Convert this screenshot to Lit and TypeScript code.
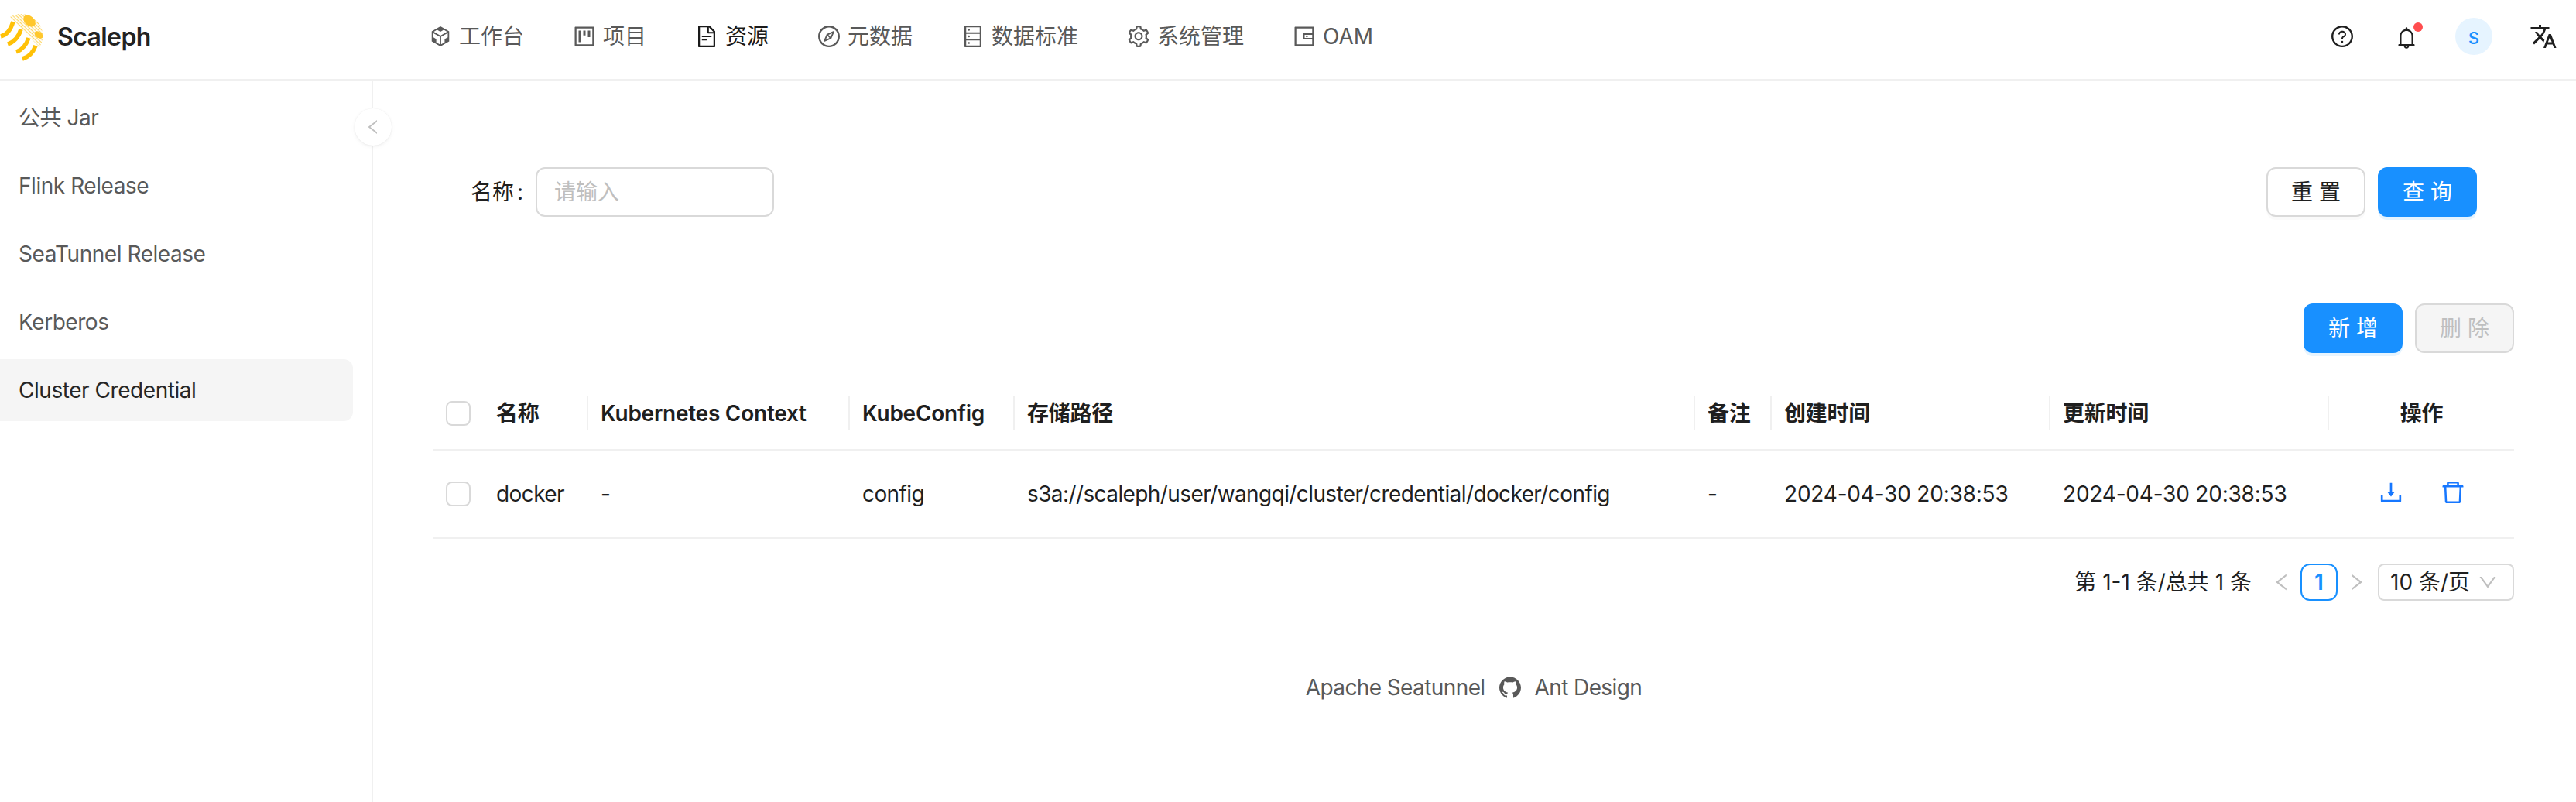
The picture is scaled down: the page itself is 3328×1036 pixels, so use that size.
import { LitElement, html, css, svg } from 'lit';
import { customElement, state } from 'lit/decorators.js';

const ICONS: Record<string, string> = {
  workbench:
    'M709.6 210l.4-.2h.2L512 96 313.9 209.8h-.2l.7.3L151.5 304v416L512 928l360.5-208V304l-162.9-94zM482.7 843.6L339.6 761V621.4L210 547.8V372.9l272.7 157.3v313.4zM238.2 321.5l134.7-77.8 138.9 79.7 139.1-79.9 135.2 78-273.9 158-274-158zM814 548.3l-128.8 73.1v139.1l-143.9 83V530.4L814 373.1v175.2z',
  project:
    'M280 752h80c4.4 0 8-3.6 8-8V280c0-4.4-3.6-8-8-8h-80c-4.4 0-8 3.6-8 8v464c0 4.4 3.6 8 8 8zm192-280h80c4.4 0 8-3.6 8-8V280c0-4.4-3.6-8-8-8h-80c-4.4 0-8 3.6-8 8v184c0 4.4 3.6 8 8 8zm192 72h80c4.4 0 8-3.6 8-8V280c0-4.4-3.6-8-8-8h-80c-4.4 0-8 3.6-8 8v256c0 4.4 3.6 8 8 8zm216-432H144c-17.7 0-32 14.3-32 32v736c0 17.7 14.3 32 32 32h736c17.7 0 32-14.3 32-32V144c0-17.7-14.3-32-32-32zm-40 728H184V184h656v656z',
  file: 'M854.6 288.6L639.4 73.4c-6-6-14.1-9.4-22.6-9.4H192c-17.7 0-32 14.3-32 32v832c0 17.7 14.3 32 32 32h640c17.7 0 32-14.3 32-32V311.3c0-8.5-3.4-16.7-9.4-22.7zM790.2 326H602V137.8L790.2 326zm1.8 562H232V136h302v216a42 42 0 0042 42h216v494zM504 618H320c-4.4 0-8 3.6-8 8v48c0 4.4 3.6 8 8 8h184c4.4 0 8-3.6 8-8v-48c0-4.4-3.6-8-8-8zM312 490v48c0 4.4 3.6 8 8 8h384c4.4 0 8-3.6 8-8v-48c0-4.4-3.6-8-8-8H320c-4.4 0-8 3.6-8 8z',
  compass:
    'M512 64C264.6 64 64 264.6 64 512s200.6 448 448 448 448-200.6 448-448S759.4 64 512 64zm0 820c-205.4 0-372-166.6-372-372s166.6-372 372-372 372 166.6 372 372-166.6 372-372 372zm198.4-588.1a32 32 0 00-24.5.5L414.9 415 296.4 686c-3.6 8.2-3.6 17.5 0 25.7 3.4 7.8 9.7 13.9 17.7 17 3.8 1.5 7.7 2.2 11.7 2.2 4.4 0 8.7-.9 12.8-2.7l271-118.6 118.5-271a32.06 32.06 0 00-17.7-42.7zM576.8 534.4l26.2 26.2-42.4 42.4-26.2-26.2L380 644.4 447.5 490 422 464.4l42.4-42.4 25.5 25.5L644.4 380l-67.6 154.4zM464.4 422L422 464.4l25.5 25.6 86.9 86.8 26.2 26.2 42.4-42.4-26.2-26.2-86.8-86.9z',
  database:
    'M832 64H192c-17.7 0-32 14.3-32 32v832c0 17.7 14.3 32 32 32h640c17.7 0 32-14.3 32-32V96c0-17.7-14.3-32-32-32zm-600 72h560v208H232V136zm560 480H232V408h560v208zm0 272H232V680h560v208zM304 240a40 40 0 1080 0 40 40 0 10-80 0zm0 272a40 40 0 1080 0 40 40 0 10-80 0zm0 272a40 40 0 1080 0 40 40 0 10-80 0z',
  setting:
    'M924.8 625.7l-65.5-56c3.1-19 4.7-38.4 4.7-57.8s-1.6-38.8-4.7-57.8l65.5-56a32.03 32.03 0 009.3-35.2l-.9-2.6a443.74 443.74 0 00-79.7-137.9l-1.8-2.1a32.12 32.12 0 00-35.1-9.5l-81.3 28.9c-30-24.6-63.5-44-99.7-57.6l-15.7-85a32.05 32.05 0 00-25.8-25.7l-2.7-.5c-52.1-9.4-106.9-9.4-159 0l-2.7.5a32.05 32.05 0 00-25.8 25.7l-15.8 85.4a351.86 351.86 0 00-99 57.4l-81.9-29.1a32 32 0 00-35.1 9.5l-1.8 2.1a446.02 446.02 0 00-79.7 137.9l-.9 2.6c-4.5 12.5-.8 26.5 9.3 35.2l66.3 56.6c-3.1 18.8-4.6 38-4.6 57.1 0 19.2 1.5 38.4 4.6 57.1L99 625.5a32.03 32.03 0 00-9.3 35.2l.9 2.6c18.1 50.4 44.9 96.9 79.7 137.9l1.8 2.1a32.12 32.12 0 0035.1 9.5l81.9-29.1c29.8 24.5 63.1 43.9 99 57.4l15.8 85.4a32.05 32.05 0 0025.8 25.7l2.7.5a449.4 449.4 0 00159 0l2.7-.5a32.05 32.05 0 0025.8-25.7l15.7-85a350 350 0 0099.7-57.6l81.3 28.9a32 32 0 0035.1-9.5l1.8-2.1c34.8-41.1 61.6-87.5 79.7-137.9l.9-2.6c4.5-12.3.8-26.3-9.3-35zM788.3 465.9c2.5 15.1 3.8 30.6 3.8 46.1s-1.3 31-3.8 46.1l-6.6 40.1 74.7 63.9a370.03 370.03 0 01-42.6 73.6L721 702.8l-31.4 25.8c-23.9 19.6-50.5 35-79.3 45.8l-38.1 14.3-17.9 97a377.5 377.5 0 01-85 0l-17.9-97.2-37.8-14.5c-28.5-10.8-55-26.2-78.7-45.7l-31.4-25.9-93.4 33.2c-17-22.9-31.2-47.6-42.6-73.6l75.5-64.5-6.5-40c-2.4-14.9-3.7-30.3-3.7-45.5 0-15.3 1.2-30.6 3.7-45.5l6.5-40-75.5-64.5c11.3-26.1 25.6-50.7 42.6-73.6l93.4 33.2 31.4-25.9c23.7-19.5 50.2-34.9 78.7-45.7l37.9-14.3 17.9-97.2c28.1-3.2 56.8-3.2 85 0l17.9 97 38.1 14.3c28.7 10.8 55.4 26.2 79.3 45.8l31.4 25.8 92.8-32.9c17 22.9 31.2 47.6 42.6 73.6L781.8 426l6.5 39.9zM512 326c-97.2 0-176 78.8-176 176s78.8 176 176 176 176-78.8 176-176-78.8-176-176-176zm79.2 255.2A111.6 111.6 0 01512 614c-29.9 0-58-11.7-79.2-32.8A111.6 111.6 0 01400 502c0-29.9 11.7-58 32.8-79.2C454 401.6 482.1 390 512 390c29.9 0 58 11.6 79.2 32.8A111.6 111.6 0 01624 502c0 29.9-11.7 58-32.8 79.2z',
  wallet:
    'M880 112H144c-17.7 0-32 14.3-32 32v736c0 17.7 14.3 32 32 32h736c17.7 0 32-14.3 32-32V144c0-17.7-14.3-32-32-32zm-40 464H528V448h312v128zm0 264H184V184h656v200H496c-17.7 0-32 14.3-32 32v192c0 17.7 14.3 32 32 32h344v200zM580 512a40 40 0 1080 0 40 40 0 10-80 0z',
  question:
    'M512 64C264.6 64 64 264.6 64 512s200.6 448 448 448 448-200.6 448-448S759.4 64 512 64zm0 820c-205.4 0-372-166.6-372-372s166.6-372 372-372 372 166.6 372 372-166.6 372-372 372zM623.6 316.7C593.6 290.4 554 276 512 276s-81.6 14.5-111.6 40.7C369.2 344 352 380.7 352 420v7.6c0 4.4 3.6 8 8 8h48c4.4 0 8-3.6 8-8V420c0-44.1 43.1-80 96-80s96 35.9 96 80c0 31.1-22 59.6-56.1 72.7-21.2 8.1-39.2 22.3-52.1 40.9-13.1 19-19.9 41.8-19.9 64.9V620c0 4.4 3.6 8 8 8h48c4.4 0 8-3.6 8-8v-22.7a48.3 48.3 0 0130.9-44.8c59-22.7 97.1-74.7 97.1-132.5.1-39.3-17.1-76-48.3-103.3zM472 732a40 40 0 1080 0 40 40 0 10-80 0z',
  bell: 'M816 768h-24V428c0-141.1-104.3-257.7-240-277.1V112c0-22.1-17.9-40-40-40s-40 17.9-40 40v38.9c-135.7 19.4-240 136-240 277.1v340h-24c-17.7 0-32 14.3-32 32v32c0 4.4 3.6 8 8 8h216c0 61.8 50.2 112 112 112s112-50.2 112-112h216c4.4 0 8-3.6 8-8v-32c0-17.7-14.3-32-32-32zM512 888c-26.5 0-48-21.5-48-48h96c0 26.5-21.5 48-48 48zM304 768V428c0-55.6 21.6-107.8 60.9-147.1S456.4 220 512 220c55.6 0 107.8 21.6 147.1 60.9S720 372.4 720 428v340H304z',
  download:
    'M505.7 661a8 8 0 0012.6 0l112-141.7c4.1-5.2.4-12.9-6.3-12.9h-74.1V168c0-4.4-3.6-8-8-8h-60c-4.4 0-8 3.6-8 8v338.3H400c-6.7 0-10.4 7.7-6.3 12.9l112 141.8zM878 626h-60c-4.4 0-8 3.6-8 8v154H214V634c0-4.4-3.6-8-8-8h-60c-4.4 0-8 3.6-8 8v198c0 17.7 14.3 32 32 32h684c17.7 0 32-14.3 32-32V634c0-4.4-3.6-8-8-8z',
  trash:
    'M360 184h-8c4.4 0 8-3.6 8-8v8h304v-8c0 4.4 3.6 8 8 8h-8v72h72v-80c0-35.3-28.7-64-64-64H352c-35.3 0-64 28.7-64 64v80h72v-72zm504 72H160c-17.7 0-32 14.3-32 32v32c0 4.4 3.6 8 8 8h60.4l24.7 523c1.6 34.1 29.8 61 63.9 61h454c34.2 0 62.3-26.8 63.9-61l24.7-523H888c4.4 0 8-3.6 8-8v-32c0-17.7-14.3-32-32-32zM731.3 840H292.7l-24.2-512h487l-24.2 512z',
  github:
    'M511.6 76.3C264.3 76.2 64 276.4 64 523.5 64 718.9 189.3 885 363.8 946c23.5 5.9 19.9-10.8 19.9-22.2v-77.5c-135.7 15.9-141.2-73.9-150.3-88.9C215 726 171.5 718 184.5 703c30.9-15.9 62.4 4 98.9 57.9 26.4 39.1 77.9 32.5 104 26 5.7-23.5 17.9-44.5 34.7-60.8-140.6-25.2-199.2-111-199.2-213 0-49.5 16.3-95 48.3-131.7-20.4-60.5 1.9-112.3 4.9-120 58.1-5.2 118.5 41.6 123.2 45.3 33-8.9 70.7-13.6 112.9-13.6 42.4 0 80.2 4.9 113.5 13.9 11.3-8.6 67.3-48.8 121.3-43.9 2.9 7.7 24.7 58.3 5.5 118 32.4 36.8 48.9 82.7 48.9 132.3 0 102.2-59 188.1-200 212.9a127.5 127.5 0 0138.1 91v112.5c.8 9 0 17.9 15 17.9 177.1-59.7 304.6-227 304.6-424.1 0-247.2-200.4-447.3-447.5-447.3z',
  left: 'M724 218.3V141c0-6.7-7.7-10.4-12.9-6.3L260.3 486.8a31.86 31.86 0 000 50.3l450.8 352.1c5.3 4.1 12.9.4 12.9-6.3v-77.3c0-4.9-2.3-9.6-6.1-12.6l-360-281 360-281.1c3.8-3 6.1-7.7 6.1-12.6z',
  right:
    'M765.7 486.8L314.9 134.7A7.97 7.97 0 00302 141v77.3c0 4.9 2.3 9.6 6.1 12.6l360 281.1-360 281.1c-3.9 3-6.1 7.7-6.1 12.6V883c0 6.7 7.7 10.4 12.9 6.3l450.8-352.1a31.96 31.96 0 000-50.4z',
  down: 'M884 256h-75c-5.1 0-9.9 2.5-12.9 6.5L512 654.2 227.9 262.5c-3-4-7.8-6.5-12.9-6.5h-75c-6.5 0-10.3 7.4-6.5 12.7l352.6 486.1c12.8 17.6 39 17.6 51.7 0l352.6-486.1c3.9-5.3.1-12.7-6.4-12.7z',
};

const icon = (name: string, size = 32) => html`<svg
  width=${size}
  height=${size}
  viewBox="0 0 1024 1024"
  fill="currentColor"
>
  ${svg`<path d=${ICONS[name]}></path>`}
</svg>`;

const MENU = [
  { icon: 'workbench', label: '工作台' },
  { icon: 'project', label: '项目' },
  { icon: 'file', label: '资源', active: true },
  { icon: 'compass', label: '元数据' },
  { icon: 'database', label: '数据标准' },
  { icon: 'setting', label: '系统管理' },
  { icon: 'wallet', label: 'OAM' },
];

const SIDE_ITEMS = ['公共 Jar', 'Flink Release', 'SeaTunnel Release', 'Kerberos', 'Cluster Credential'];

const COLUMNS = ['名称', 'Kubernetes Context', 'KubeConfig', '存储路径', '备注', '创建时间', '更新时间'];

const ROW = [
  { text: 'docker' },
  { text: '-' },
  { text: 'config' },
  { text: 's3a://scaleph/user/wangqi/cluster/credential/docker/config' },
  { text: '-' },
  { text: '2024-04-30 20:38:53', date: true },
  { text: '2024-04-30 20:38:53', date: true },
];

@customElement('app-root')
class AppRoot extends LitElement {
  static styles = css`
    :host {
      display: block;
      width: 3328px;
      height: 1036px;
      overflow: hidden;
      background: #fff;
      color: #1f1f1f;
      font-family: Inter, 'Noto Sans CJK SC', sans-serif;
      font-size: 28px;
      line-height: 44px;
    }

    svg {
      display: block;
      flex: none;
    }

    .header {
      display: flex;
      align-items: center;
      height: 102px;
      border-bottom: 2px solid #f0f0f0;
    }

    .brand {
      display: flex;
      align-items: center;
      gap: 12px;
      width: 553px;
      flex: none;
      font-size: 32px;
      font-weight: 600;
      letter-spacing: -0.6px;
      color: #222;
    }

    .brand span {
      padding-bottom: 6px;
    }

    .menu {
      display: flex;
      gap: 62px;
      flex: 1;
      padding-bottom: 8px;
    }

    .menu__item {
      display: flex;
      align-items: center;
      gap: 8px;
      color: #595959;
    }

    .menu__item--active {
      color: #1a1a1a;
    }

    .tools {
      position: relative;
      height: 102px;
      width: 318px;
      flex: none;
      color: #1f1f1f;
    }

    .tools > * {
      position: absolute;
    }

    .help {
      left: 0;
      top: 31px;
    }

    .bell {
      left: 83px;
      top: 33px;
    }

    .dot {
      left: 108px;
      top: 29px;
      width: 12px;
      height: 12px;
      border-radius: 50%;
      background: #ff4d4f;
    }

    .avatar {
      left: 162px;
      top: 23px;
      width: 48px;
      height: 48px;
      border-radius: 50%;
      background: #e6f4ff;
      color: #1890ff;
      display: flex;
      align-items: center;
      justify-content: center;
    }

    .lang {
      left: 258px;
      top: 29px;
    }

    .body {
      display: flex;
      height: 932px;
    }

    .side {
      position: relative;
      width: 480px;
      flex: none;
      border-right: 2px solid #f0f0f0;
      padding-top: 8px;
    }

    .side__item {
      display: flex;
      align-items: center;
      height: 80px;
      width: 456px;
      box-sizing: border-box;
      margin-bottom: 8px;
      padding-left: 24px;
      border-radius: 0 12px 12px 0;
      color: #595959;
      letter-spacing: -0.45px;
    }

    .side__item--active {
      background: #f5f5f5;
      color: #262626;
    }

    .collapse {
      position: absolute;
      right: -26px;
      top: 36px;
      width: 48px;
      height: 48px;
      border-radius: 50%;
      background: #fff;
      box-shadow: 0 2px 8px -2px rgba(0, 0, 0, 0.05), 0 1px 4px -1px rgba(25, 15, 15, 0.07),
        0 0 1px 0 rgba(0, 0, 0, 0.08);
      color: #bfbfbf;
      display: flex;
      align-items: center;
      justify-content: center;
    }

    .content {
      flex: 1;
      padding: 112px 80px 0 78px;
      min-width: 0;
    }

    .search {
      display: flex;
      align-items: center;
      height: 64px;
      padding: 0 48px;
    }

    .search__label {
      margin-right: 16px;
    }

    .search__colon {
      margin-left: 4px;
    }

    .search__input {
      width: 308px;
      height: 64px;
      box-sizing: border-box;
      padding-left: 22px;
      border: 2px solid #d9d9d9;
      border-radius: 12px;
      color: #bfbfbf;
      display: flex;
      align-items: center;
    }

    .btns {
      display: flex;
      gap: 16px;
      margin-left: auto;
    }

    .btn {
      width: 128px;
      height: 64px;
      box-sizing: border-box;
      border: 2px solid #d9d9d9;
      border-radius: 12px;
      background: #fff;
      box-shadow: 0 4px 0 rgba(0, 0, 0, 0.02);
      display: flex;
      align-items: center;
      justify-content: center;
      color: #1f1f1f;
    }

    .btn--primary {
      background: #1890ff;
      border-color: #1890ff;
      color: #fff;
      box-shadow: 0 4px 0 rgba(5, 145, 255, 0.1);
    }

    .btn--disabled {
      background: #f5f5f5;
      color: #bfbfbf;
      box-shadow: none;
    }

    .toolbar {
      display: flex;
      justify-content: flex-end;
      gap: 16px;
      margin-top: 112px;
      margin-bottom: 32px;
    }

    .row {
      display: grid;
      grid-template-columns: 65px 135px 338px 213px 879px 99px 360px 360px 239px;
      align-items: center;
      border-bottom: 2px solid #f0f0f0;
    }

    .row--head {
      height: 94px;
      box-sizing: border-box;
      font-weight: 600;
      letter-spacing: -0.25px;
    }

    .row--body {
      height: 114px;
      box-sizing: border-box;
      letter-spacing: -0.6px;
    }

    .cell {
      position: relative;
      padding: 0 16px;
      white-space: nowrap;
    }

    .cell--date {
      letter-spacing: -0.2px;
    }

    .row--head .cell:not(.cell--op):not(.cell--check)::after {
      content: '';
      position: absolute;
      right: 0;
      top: 0;
      width: 2px;
      height: 44px;
      background: #f0f0f0;
    }

    .cell--check {
      padding: 0 0 0 16px;
    }

    .cell--op {
      display: flex;
      justify-content: center;
      gap: 44px;
      color: #1677ff;
    }

    .row--body .cell--op {
      padding-bottom: 4px;
    }

    .row--head .cell--op {
      color: #1f1f1f;
    }

    .check {
      width: 32px;
      height: 32px;
      box-sizing: border-box;
      border: 2px solid #d9d9d9;
      border-radius: 8px;
    }

    .pager {
      display: flex;
      align-items: center;
      justify-content: flex-end;
      height: 48px;
      margin-top: 32px;
    }

    .pager__total {
      margin-right: 15px;
    }

    .pager__arrow {
      color: #bfbfbf;
      width: 48px;
      display: flex;
      justify-content: center;
    }

    .pager__page {
      width: 48px;
      height: 48px;
      box-sizing: border-box;
      border: 2px solid #1890ff;
      border-radius: 12px;
      color: #1890ff;
      font-weight: 600;
      display: flex;
      align-items: center;
      justify-content: center;
    }

    .pager__size {
      display: flex;
      align-items: center;
      justify-content: space-between;
      width: 176px;
      height: 48px;
      box-sizing: border-box;
      margin-left: 4px;
      padding: 0 18px 0 14px;
      border: 2px solid #d9d9d9;
      border-radius: 8px;
    }

    .pager__size svg {
      color: #bfbfbf;
    }

    .footer {
      display: flex;
      align-items: center;
      justify-content: center;
      gap: 16px;
      margin-top: 90px;
      color: #595959;
      letter-spacing: -0.6px;
    }
  `;

  @state()
  private activeSide = 4;

  private renderLogo() {
    const legs = [
      'M17 28C14 38 9 45 1 47',
      'M27 38C24 48 19 54 10 57',
      'M37 49C34 58 30 64 21 67',
      'M46 59C43 67 39 73 29 76',
    ];
    return html`<svg width="62" height="102" viewBox="0 0 62 102">
      <defs>
        <pattern id="hatch" width="3" height="3" patternUnits="userSpaceOnUse" patternTransform="rotate(43)">
          <rect width="3" height="1.2" fill="#fcd766"></rect>
        </pattern>
        <clipPath id="dome"><path d="M13 22L51 61A28 28 0 0 0 13 22Z"></path></clipPath>
      </defs>
      <rect width="62" height="80" fill="url(#hatch)" clip-path="url(#dome)"></rect>
      <ellipse cx="38" cy="27" rx="9" ry="6" transform="rotate(42 38 27)" fill="#ffc72c"></ellipse>
      <ellipse cx="50" cy="45" rx="6" ry="4" transform="rotate(35 50 45)" fill="#ffc72c"></ellipse>
      ${legs.map(
        (d) => svg`<path d=${d} fill="none" stroke="#ffc107" stroke-width="5.5"></path>`,
      )}
    </svg>`;
  }

  private renderHeader() {
    return html`<div class="header">
      <div class="brand">${this.renderLogo()}<span>Scaleph</span></div>
      <div class="menu">
        ${MENU.map(
          (item) => html`<div class="menu__item ${item.active ? 'menu__item--active' : ''}">
            ${icon(item.icon)}<span>${item.label}</span>
          </div>`,
        )}
      </div>
      <div class="tools">
        <div class="help">${icon('question')}</div>
        <div class="bell">${icon('bell')}</div>
        <div class="dot"></div>
        <div class="avatar">s</div>
        <div class="lang">
          <svg width="36" height="36" viewBox="0 0 24 24" fill="currentColor">
            <path
              d="M12.87 15.07l-2.54-2.51.03-.03c1.74-1.94 2.98-4.17 3.71-6.53H17V4h-7V2H8v2H1v1.99h11.17C11.5 7.92 10.44 9.75 9 11.35 8.07 10.32 7.3 9.19 6.69 8h-2c.73 1.63 1.73 3.17 2.98 4.56l-5.09 5.02L4 19l5-5 3.11 3.11.76-2.04zM18.5 10h-2L12 22h2l1.12-3h4.75L21 22h2l-4.5-12zm-2.62 7l1.62-4.33L19.12 17h-3.24z"
            ></path>
          </svg>
        </div>
      </div>
    </div>`;
  }

  private renderSide() {
    return html`<div class="side">
      ${SIDE_ITEMS.map(
        (label, i) => html`<div class="side__item ${i === this.activeSide ? 'side__item--active' : ''}">
          ${label}
        </div>`,
      )}
      <div class="collapse">${icon('left', 24)}</div>
    </div>`;
  }

  private renderTable() {
    return html`<div class="row row--head">
        <div class="cell cell--check"><div class="check"></div></div>
        ${COLUMNS.map((c) => html`<div class="cell">${c}</div>`)}
        <div class="cell cell--op">操作</div>
      </div>
      <div class="row row--body">
        <div class="cell cell--check"><div class="check"></div></div>
        ${ROW.map((c) => html`<div class="cell ${c.date ? 'cell--date' : ''}">${c.text}</div>`)}
        <div class="cell cell--op">${icon('download', 36)}${icon('trash', 36)}</div>
      </div>`;
  }

  render() {
    return html`
      ${this.renderHeader()}
      <div class="body">
        ${this.renderSide()}
        <div class="content">
          <div class="search">
            <span class="search__label">名称<span class="search__colon">:</span></span>
            <div class="search__input">请输入</div>
            <div class="btns">
              <div class="btn">重 置</div>
              <div class="btn btn--primary">查 询</div>
            </div>
          </div>
          <div class="toolbar">
            <div class="btn btn--primary">新 增</div>
            <div class="btn btn--disabled">删 除</div>
          </div>
          ${this.renderTable()}
          <div class="pager">
            <span class="pager__total">第 1-1 条/总共 1 条</span>
            <div class="pager__arrow">${icon('left', 28)}</div>
            <div class="pager__page">1</div>
            <div class="pager__arrow">${icon('right', 28)}</div>
            <div class="pager__size"><span>10 条/页</span>${icon('down', 28)}</div>
          </div>
          <div class="footer">
            <span>Apache Seatunnel</span>${icon('github')}<span>Ant Design</span>
          </div>
        </div>
      </div>
    `;
  }
}
